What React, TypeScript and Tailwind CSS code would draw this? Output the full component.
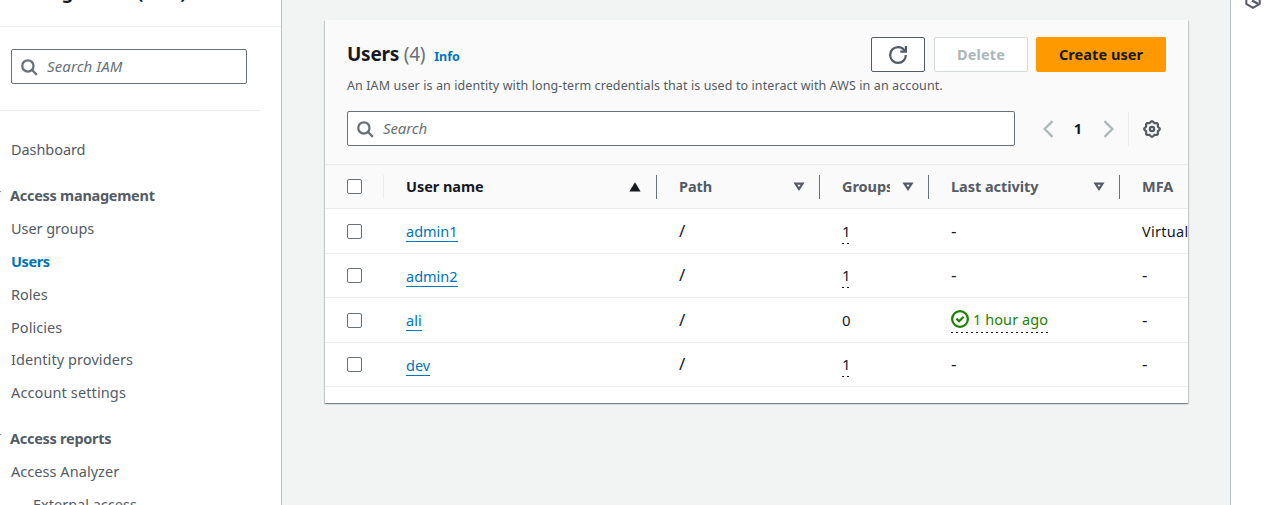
import React from "react";

type IconProps = { className?: string };

const SearchIcon = ({ className = "" }: IconProps) => (
  <svg viewBox="0 0 16 16" className={"h-[18px] w-[18px] shrink-0 " + className} fill="none" stroke="currentColor" strokeWidth="2">
    <circle cx="7" cy="7" r="5" />
    <path d="M15 15l-4.5-4.5" />
  </svg>
);

const RefreshIcon = () => (
  <svg viewBox="0 0 16 16" className="h-[18px] w-[18px]" fill="none" stroke="currentColor" strokeWidth="2">
    <path d="M10 5h5V0" />
    <path d="M15 8a6.957 6.957 0 0 1-7 7 6.957 6.957 0 0 1-7-7 6.957 6.957 0 0 1 7-7 6.870 6.870 0 0 1 6.300 4" />
  </svg>
);

const gearOutline =
  Array.from({ length: 96 }, (_, i) => {
    const a = (i / 96) * Math.PI * 2;
    const r = 6.3 + 0.6 * Math.cos(8 * a);
    return `${i ? "L" : "M"}${(8 + r * Math.cos(a)).toFixed(2)} ${(8 + r * Math.sin(a)).toFixed(2)}`;
  }).join("") + "Z";

const GearIcon = () => (
  <svg viewBox="0 0 16 16" className="h-[18px] w-[18px]" fill="none" stroke="currentColor" strokeWidth="2" strokeLinejoin="round">
    <path d={gearOutline} />
    <circle cx="8" cy="8" r="1.900" />
  </svg>
);

const Chevron = ({ right = false }: { right?: boolean }) => (
  <svg viewBox="0 0 16 16" className="h-[18px] w-[18px] text-[#aab7b8]" fill="none" stroke="currentColor" strokeWidth="2">
    <path d={right ? "M4 1l7 7-7 7" : "M12 1L5 8l7 7"} />
  </svg>
);

const SortIcon = ({ filled = false }: { filled?: boolean }) =>
  filled ? (
    <svg viewBox="0 0 16 16" className="h-[18px] w-[18px] shrink-0" fill="currentColor">
      <path d="M3 12h10L8 3.800z" />
    </svg>
  ) : (
    <svg viewBox="0 0 16 16" className="h-[18px] w-[18px] shrink-0" fill="none" stroke="currentColor" strokeWidth="1.900">
      <path d="M4.800 5h6.400L8 9.900z" />
    </svg>
  );

const CheckIcon = () => (
  <svg viewBox="0 0 16 16" className="h-[18px] w-[18px]" fill="none" stroke="currentColor" strokeWidth="2">
    <circle cx="8" cy="8" r="7" />
    <path d="M4.800 7.700l2.400 2.300 4-4" />
  </svg>
);

const HexIcon = () => (
  <svg viewBox="0 0 18 18" className="h-[18px] w-[18px]" fill="none" stroke="currentColor" strokeWidth="2">
    <path d="M9 1.200l6.700 3.900v7.800L9 16.800l-6.700-3.900V5.100z" />
    <path d="M8 9.500l6 3.300" strokeWidth="2.400" />
  </svg>
);

const Checkbox = () => <span className="block h-[15px] w-[15px] rounded-[2px] border border-[#687078] bg-white" />;

const NavItem = ({ label, tone = "" }: { label: string; tone?: string }) => (
  <li className={"flex h-[32.800px] items-center pl-[11px] " + tone}>{label}</li>
);

const NavHeading = ({ label }: { label: string }) => (
  <div className="flex h-[33px] items-center font-bold tracking-[-0.270px]">
    <svg viewBox="0 0 10 8" className="-ml-[9px] mr-[9px] mb-[3px] h-2 w-[10px]" fill="currentColor"><path d="M0 1h10L5 8z" /></svg>
    {label}
  </div>
);

const cols = "grid grid-cols-[59px_273px_163px_109px_191px_200px] items-center";

const HeaderCell = ({ label, filled = false }: { label: string; filled?: boolean }) => (
  <div className={"flex h-6 items-center border-r border-[#687078] pl-[22px] " + (filled ? "pr-[12px] text-[#16191f]" : "pr-[11px] text-[#545b64]")}>
    <span className="mb-[2px] min-w-0 flex-1 overflow-hidden whitespace-nowrap tracking-[-0.050px]">{label}</span>
    <span className="ml-[9px] flex"><SortIcon filled={filled} /></span>
  </div>
);

const dots = "h-px w-full bg-[repeating-linear-gradient(90deg,#16191f_0_2px,transparent_2px_5px)]";

const users = [
  { name: "admin1", groups: 1, last: "-", mfa: "Virtual" },
  { name: "admin2", groups: 1, last: "-", mfa: "-" },
  { name: "ali", groups: 0, last: "1 hour ago", mfa: "-" },
  { name: "dev", groups: 1, last: "-", mfa: "-" },
];

export default function App() {
  return (
    <div className="flex h-[505px] w-[1265px] overflow-hidden bg-[#f2f3f3] font-['Noto_Sans',sans-serif] text-[14.500px] leading-[22px] text-[#16191f]">
      <aside className="h-full w-[282px] shrink-0 overflow-hidden border-r border-[#bcc3c6] bg-white text-[#545b64]">
        <div className="flex h-[27px] items-end border-b border-[#eaeded] pb-[22px] pl-[11px] text-[18.200px] font-bold text-[#16191f]">
          <span className="whitespace-nowrap leading-[24px]">Management (IAM)</span>
        </div>
        <div className="mr-[21px] h-[84px] border-b border-[#eaeded] pl-[11px] pt-[22px]">
          <div className="flex h-[35px] w-[236px] items-center rounded-[2px] border border-[#687078] pl-[8px] text-[#687078]">
            <SearchIcon />
            <span className="mb-[2px] ml-[9px] text-[15px] italic tracking-[0.100px]">Search IAM</span>
          </div>
        </div>
        <ul className="pt-[22px]"><NavItem label="Dashboard" tone="tracking-[-0.070px]" /></ul>
        <div className="pt-[13px]"><NavHeading label="Access management" /></div>
        <ul>
          <NavItem label="User groups" tone="tracking-[-0.050px]" />
          <NavItem label="Users" tone="font-bold tracking-[-0.400px] text-[#0073bb]" />
          <NavItem label="Roles" tone="" />
          <NavItem label="Policies" tone="tracking-[0.050px]" />
          <NavItem label="Identity providers" tone="tracking-[0.080px]" />
          <NavItem label="Account settings" tone="tracking-[0.120px]" />
        </ul>
        <div className="pt-[13px]"><NavHeading label="Access reports" /></div>
        <ul>
          <NavItem label="Access Analyzer" tone="tracking-[0.050px]" />
          <li className="flex h-[33px] items-center pl-[33px]">External access</li>
        </ul>
      </aside>

      <main className="min-w-0 flex-1 pl-[43px] pt-5">
        <section className="h-[383px] w-[863px] overflow-hidden bg-white shadow-[0_1px_1px_0_rgba(0,28,36,0.3),1px_1px_1px_0_rgba(0,28,36,0.15),-1px_1px_1px_0_rgba(0,28,36,0.15)]">
          <div className="h-[145px] border-b border-[#eaeded] bg-[#fafafa] px-[22px] pt-[17px]">
            <div className="flex h-[35px] items-center">
              <h1 className="mb-[2px] text-[19px] font-bold tracking-[-0.250px]">Users <span className="font-normal text-[#687078]">(4)</span></h1>
              <a className="ml-[9px] mt-[4px] text-[12.500px] font-bold text-[#0073bb]">Info</a>
              <div className="ml-auto flex gap-2 font-bold">
                <button className="flex h-[35px] w-[54px] items-center justify-center rounded-[2px] border border-[#545b64] bg-white text-[#545b64]"><RefreshIcon /></button>
                <button className="ml-px h-[35px] w-[94px] rounded-[2px] border border-[#d5dbdb] bg-white pb-[2px] text-[#aab7b8] tracking-[0.100px]">Delete</button>
                <button className="h-[35px] w-[130px] rounded-[2px] bg-[#ff9900] pb-[2px] text-[#16191f] tracking-[0.050px]">Create user</button>
              </div>
            </div>
            <p className="mt-[4px] text-[12.500px] leading-[20px] tracking-[0.100px] text-[#545b64]">An IAM user is an identity with long-term credentials that is used to interact with AWS in an account.</p>
            <div className="mt-[15px] flex items-center">
              <div className="flex h-[35px] w-[668px] items-center rounded-[2px] border border-[#687078] bg-white pl-[8px] text-[#687078]">
                <SearchIcon />
                <span className="mb-[2px] ml-[9px] text-[15px] italic tracking-[-0.100px]">Search</span>
              </div>
              <div className="ml-[24px] flex items-center">
                <Chevron />
                <span className="mb-[2px] w-[43px] pr-px text-center font-bold">1</span>
                <Chevron right />
              </div>
              <div className="ml-[10px] flex h-[34px] items-center border-l border-[#eaeded] pl-[14px] text-[#545b64]"><GearIcon /></div>
            </div>
          </div>
          <div className={cols + " h-[44px] border-b border-[#eaeded] bg-[#fafafa] font-bold"}>
            <div className="flex h-6 items-center border-r border-[#eaeded] pl-[22px]"><Checkbox /></div>
            <HeaderCell label="User name" filled />
            <HeaderCell label="Path" />
            <HeaderCell label="Groups" />
            <HeaderCell label="Last activity" />
            <div className="mb-[2px] pl-[22px] text-[#545b64]">MFA</div>
          </div>
          {users.map((u) => (
            <div key={u.name} className={cols + " h-[44.500px] border-b border-[#eaeded]"}>
              <div className="pl-[22px] pt-px"><Checkbox /></div>
              <div className="pl-[22px] pt-px"><a className="inline-block border-b border-[#0073bb] leading-[19px] text-[#0073bb]">{u.name}</a></div>
              <div className="pl-[22px] text-[17px]">/</div>
              <div className="flex pl-[22px] text-[15px]">
                <span className="flex flex-col">{u.groups}{u.groups > 0 && <span className={"mt-px -mb-[2px] " + dots} />}</span>
              </div>
              <div className="flex pl-[22px]">
                {u.last === "-" ? <span className="text-[17px]">-</span> : (
                  <span className="flex flex-col pt-px">
                    <span className="flex items-center gap-1 text-[#1d8102] tracking-[0.080px]"><CheckIcon />{u.last}</span>
                    <span className={"-mb-px mt-[2px] " + dots} />
                  </span>
                )}
              </div>
              <div className={"whitespace-nowrap pl-[22px] " + (u.mfa === "-" ? "text-[17px]" : "tracking-[0.300px]")}>{u.mfa}</div>
            </div>
          ))}
        </section>
      </main>

      <aside className="h-full w-[35px] shrink-0 border-l border-[#bcc3c6] bg-white pl-[13px] text-[#545b64]">
        <div className="-mt-[9px]"><HexIcon /></div>
      </aside>
    </div>
  );
}
